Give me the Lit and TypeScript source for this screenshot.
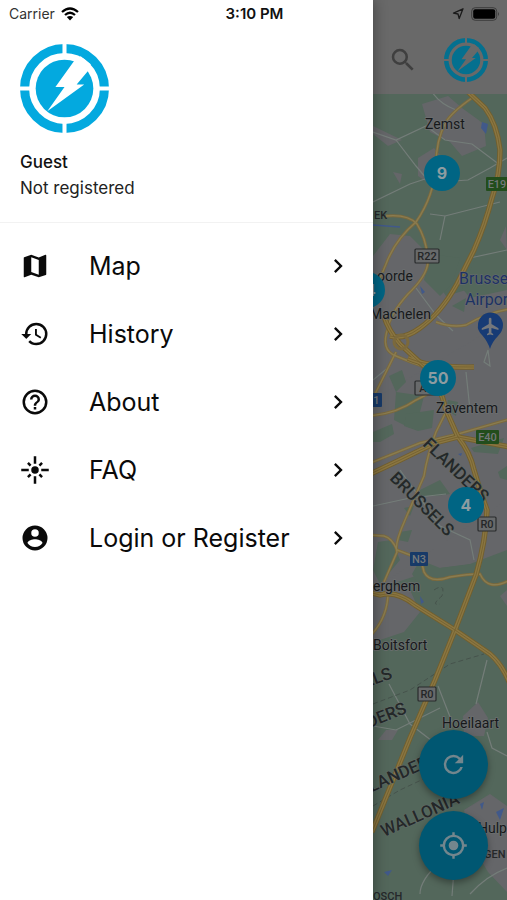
import { LitElement, html, css, svg } from "lit";
import { customElement } from "lit/decorators.js";

const ICONS = {
  map: svg`<path d="M20.5 3l-.16.03L15 5.1 9 3 3.36 4.9c-.21.07-.36.25-.36.48V20.5c0 .28.22.5.5.5l.16-.03L9 18.9l6 2.1 5.64-1.9c.21-.07.36-.25.36-.48V3.5c0-.28-.22-.5-.5-.5zM15 19l-6-2.11V5l6 2.11V19z"/>`,
  history: svg`<path d="M13 3a9 9 0 0 0-9 9H1l3.89 3.89.07.14L9 12H6a7 7 0 1 1 7 7c-1.93 0-3.68-.79-4.94-2.06l-1.42 1.42A8.95 8.95 0 0 0 13 21a9 9 0 0 0 0-18zm-1 5v5l4.28 2.54.72-1.21-3.5-2.08V8H12z"/>`,
  help: svg`<path d="M11 18h2v-2h-2v2zm1-16a10 10 0 1 0 0 20 10 10 0 0 0 0-20zm0 18a8 8 0 1 1 0-16 8 8 0 0 1 0 16zm0-14a4 4 0 0 0-4 4h2a2 2 0 1 1 4 0c0 2-3 1.75-3 5h2c0-2.25 3-2.5 3-5a4 4 0 0 0-4-4z"/>`,
  flare: svg`<path d="M7 11H1v2h6v-2zm2.17-3.24L7.05 5.64 5.64 7.05l2.12 2.12 1.41-1.41zM13 1h-2v6h2V1zm5.36 6.05l-1.41-1.41-2.12 2.12 1.41 1.41 2.12-2.12zM17 11v2h6v-2h-6zm-5-2a3 3 0 1 0 0 6 3 3 0 0 0 0-6zm2.83 7.24l2.12 2.12 1.41-1.41-2.12-2.12-1.41 1.41zm-9.19.71l1.41 1.41 2.12-2.12-1.41-1.41-2.12 2.12zM11 23h2v-6h-2v6z"/>`,
  account: svg`<path d="M12 2a10 10 0 1 0 0 20 10 10 0 0 0 0-20zm0 3a3 3 0 1 1 0 6 3 3 0 0 1 0-6zm0 14.2a7.2 7.2 0 0 1-6-3.22c.03-1.99 4-3.08 6-3.08 1.99 0 5.97 1.09 6 3.08a7.2 7.2 0 0 1-6 3.22z"/>`,
  chevron: svg`<path d="M10 6L8.59 7.41 13.17 12l-4.58 4.59L10 18l6-6z"/>`,
  search: svg`<path d="M15.5 14h-.79l-.28-.27A6.47 6.47 0 0 0 16 9.5 6.5 6.5 0 1 0 9.5 16c1.61 0 3.09-.59 4.23-1.57l.27.28v.79l5 4.99L20.49 19l-4.99-5zm-6 0a4.5 4.5 0 1 1 0-9 4.5 4.5 0 0 1 0 9z"/>`,
  refresh: svg`<path d="M17.65 6.35A7.95 7.95 0 0 0 12 4a8 8 0 1 0 7.73 10h-2.08A6 6 0 1 1 12 6c1.66 0 3.14.69 4.22 1.78L13 11h7V4l-2.35 2.35z"/>`,
  locate: svg`<path d="M12 8a4 4 0 1 0 0 8 4 4 0 0 0 0-8zm8.94 3A8.99 8.99 0 0 0 13 3.06V1h-2v2.06A8.99 8.99 0 0 0 3.06 11H1v2h2.06A8.99 8.99 0 0 0 11 20.94V23h2v-2.06A8.99 8.99 0 0 0 20.94 13H23v-2h-2.06zM12 19a7 7 0 1 1 0-14 7 7 0 0 1 0 14z"/>`,
};

const icon = (name: keyof typeof ICONS) =>
  html`<svg class="icon" viewBox="0 0 24 24" aria-hidden="true">${ICONS[name]}</svg>`;

const MENU: { icon: keyof typeof ICONS; label: string }[] = [
  { icon: "map", label: "Map" },
  { icon: "history", label: "History" },
  { icon: "help", label: "About" },
  { icon: "flare", label: "FAQ" },
  { icon: "account", label: "Login or Register" },
];

const CLUSTERS = [
  { x: 69, y: 79, count: "9" },
  { x: -6, y: 196, count: "14" },
  { x: 65, y: 284, count: "50" },
  { x: 93, y: 411, count: "4" },
];

const MOTORWAYS = [
  "M466 90L485 108Q497 124 500 150Q500 175 492 198Q485 225 474 250L457 284Q441 313 420 328Q404 340 390 336",
  "M384 316Q388 330 400 344L426 368Q440 384 446 410L458 437Q470 452 474 470Q481 494 487 510Q486 540 476 575L455 630L435 680L410 738L372 832",
  "M368 475L400 460L435 443L458 437L510 447",
  "M368 592L380 595Q396 590 415 605L455 630L490 654Q502 664 510 684",
  "M408 358Q430 368 474 367",
];

const ROADS = [
  "M472 98Q452 112 446 122Q436 140 436 165Q434 196 416 222Q395 240 386 264Q378 284 370 296",
  "M386 216Q408 214 417 224Q427 240 428 262Q427 276 408 294Q390 314 388 328",
  "M388 328Q380 350 396 356Q420 366 430 368",
  "M436 322Q452 328 466 325Q488 312 510 309",
  "M368 464L420 443L458 434L510 419",
  "M446 412L436 432Q427 456 424 476L405 520Q394 545 397 552Q391 566 384 582",
  "M396 352Q384 376 372 400",
  "M368 416Q396 414 416 400L440 388",
  "M368 535L384 536Q392 538 397 550L410 555Q422 558 424 572Q430 584 450 577Q468 574 480 574Q488 592 510 580",
  "M388 592Q388 616 372 634",
];

const LANES = [
  "M373 132L396 140L426 126L445 140L472 144L500 165",
  "M396 140L416 166L426 178M507 158L490 168L468 180L440 182",
  "M373 202L410 184L434 176M430 214L445 216L500 202M445 216L440 240",
  "M416 288L436 315L453 331M466 372L470 410M373 506L410 498L446 494M400 470L440 526L470 540L474 560",
  "M373 726L396 730L440 708M389 684L410 724L436 744M438 686L452 722M487 660L476 704M373 380L390 366",
  "M420 894Q420 880 440 862M470 894Q486 876 507 868M454 870L452 896M487 732L492 748L507 756",
  "M432 92Q440 104 456 110M484 362L488 350L490 366ZM470 258L507 250",
];

const BORDERS = [
  "M373 704L410 690L450 664L484 654",
  "M373 806L400 790L430 776",
  "M434 590Q446 582 442 596Q430 606 440 604",
];

const GREY_AREAS = [
  "M422 104L448 96L462 108L484 124L486 146L462 156L450 142L430 132Z",
  "M373 126L402 140L388 146L373 134Z",
  "M418 158L434 148L446 162L430 184L418 176Z",
  "M373 256L390 234L410 236L424 250L430 272L446 296L466 290L507 284V448L507 560L440 568L373 590Z",
  "M373 400L507 320V500L373 590Z",
  "M373 580L410 590L420 612L404 632L380 640L373 650Z",
  "M500 596L507 590V606Z",
  "M463 716L478 702L488 718L484 736L464 736Z",
  "M464 810L490 794L507 806V892L488 872L474 848Z",
  "M393 172L402 174L400 184Z",
  "M506 226L500 240L507 250Z",
  "M386 730H398L392 740H378Z",
];

const PARKS = [
  "M430 254L460 258L452 284L440 296L424 280Z",
  "M478 254H507V290L470 298L462 288Z",
  "M452 306L466 298L464 312Z",
  "M389 376L402 370L406 382L396 392Z",
  "M396 392L424 396L420 412L410 428L394 420Z",
  "M448 400L458 402L456 416L446 410Z",
  "M373 432L392 424L394 434L380 442H373Z",
  "M406 414L434 410L432 428L418 431L404 426Z",
  "M471 448L504 438L498 454L474 452Z",
  "M420 490L440 480L450 494L436 496L418 496Z",
  "M498 472L507 466V480L500 478Z",
  "M378 542L392 540L400 560L380 584L373 570Z",
  "M404 508L414 506L410 516ZM400 532L412 530L408 542L398 540Z",
  "M412 574L420 560L440 568L470 564L507 550V580H416Z",
];

const WATERS = [
  "M482 122L488 124L486 134L481 128Z",
  "M420 286L425 292L422 294Z",
  "M458 454L462 453L461 456Z",
  "M480 804L484 802L482 810Z",
  "M496 812L504 808L500 820Z",
  "M420 596L424 602L421 604Z",
  "M384 872L392 870L388 876Z",
];

const PLACES = [
  { x: 425, y: 129, t: "Zemst" },
  { x: 377, y: 281, t: "oorde" },
  { x: 370, y: 319, t: "Machelen" },
  { x: 436, y: 413, t: "Zaventem" },
  { x: 373, y: 591, t: "erghem" },
  { x: 373, y: 650, t: "Boitsfort" },
  { x: 442, y: 728, t: "Hoeilaart" },
  { x: 478, y: 833, t: "Hulpe" },
];

const SHIELDS = [
  { x: 415, y: 249, w: 24, t: "R22", kind: "plain" },
  { x: 415, y: 381, w: 22, t: "A3", kind: "plain" },
  { x: 478, y: 517, w: 18, t: "R0", kind: "plain" },
  { x: 418, y: 687, w: 18, t: "R0", kind: "plain" },
  { x: 486, y: 177, w: 22, t: "E19", kind: "green" },
  { x: 476, y: 430, w: 23, t: "E40", kind: "green" },
  { x: 410, y: 552, w: 18, t: "N3", kind: "blue" },
  { x: 363, y: 393, w: 19, t: "N1", kind: "blue" },
];

const REGIONS = [
  { x: 422, y: 445, r: 44, t: "FLANDERS" },
  { x: 389, y: 479, r: 45, t: "BRUSSELS" },
  { x: 316, y: 706, r: -20, t: "BRUSSELS" },
  { x: 330, y: 744, r: -22, t: "FLANDERS" },
  { x: 363, y: 796, r: -24, t: "FLANDERS" },
  { x: 384, y: 837, r: -24, t: "WALLONIA" },
];

@customElement("brand-logo")
class BrandLogo extends LitElement {
  static styles = css`
    :host { display: block; }
    svg { display: block; width: 100%; height: 100%; }
    .ring { fill: none; stroke: currentColor; stroke-width: 9; }
    .disc { fill: currentColor; }
    .gap { stroke: var(--logo-ground, #fff); stroke-width: 4; }
    .bolt { fill: var(--logo-ground, #fff); }
  `;
  render() {
    return html`<svg viewBox="0 0 88 88" role="img" aria-label="Logo">
      <circle class="ring" cx="44" cy="44" r="39.5" />
      <path class="gap" d="M44 0V12M44 76V88M0 44H12M76 44H88" />
      <circle class="disc" cx="44" cy="44" r="28.5" />
      <path class="bolt" d="M54 16L35 42.500H44L27 66.500L63.500 40H56L67 27L70 20L60 12Z" />
    </svg>`;
  }
}

@customElement("city-map")
class CityMap extends LitElement {
  static styles = css`
    :host { display: block; position: relative; overflow: hidden; background: #53675b; }
    .canvas { position: absolute; inset: 0; width: 100%; height: 100%; }
    .grey { fill: #656669; }
    .park { fill: #53675b; }
    .water { fill: #41598a; }
    .lane { fill: none; stroke: #747d79; stroke-width: 1.2; }
    .border { fill: none; stroke: #46534c; stroke-width: 1; stroke-dasharray: 5 3; }
    .road { fill: none; stroke: #7b693c; stroke-width: 3; }
    .road-core { fill: none; stroke: #8a7c50; stroke-width: 1.4; }
    .motorway { fill: none; stroke: #735f2c; stroke-width: 5.4; }
    .motorway-core { fill: none; stroke: #8a7642; stroke-width: 3.6; }
    .motorway-mid { fill: none; stroke: #735f2c; stroke-width: .8; }
    text { font-family: Roboto, sans-serif; }
    .place { font-size: 14px; fill: #17191b; stroke: #6c6f70; stroke-width: 1.5; paint-order: stroke; }
    .small { font-size: 11px; font-weight: 500; fill: #25282a; }
    .region { font-size: 17px; font-weight: 500; fill: #242829; stroke: #636b68; stroke-width: 1; paint-order: stroke; }
    .airport { font-size: 16px; fill: #1d3263; stroke: #6b6d72; stroke-width: 1; paint-order: stroke; }
    .pin { fill: #173b75; }
    .plane { fill: #74777c; }
    .shield-text { font-size: 11px; font-weight: 500; text-anchor: middle; fill: #74787a; }
    .plain { fill: #686a6b; stroke: #292b2c; stroke-width: 1.2; }
    .green { fill: #224d1c; }
    .blue { fill: #183a68; }
    .shield-text.on-plain { fill: #242627; }
    .cluster {
      position: absolute;
      width: 36px;
      height: 36px;
      transform: translate(-50%, -50%);
      border: 0;
      border-radius: 50%;
      padding: 0;
      background: #006584;
      color: #8d9ca1;
      font: 700 16px/36px Inter, sans-serif;
    }
  `;
  render() {
    return html`
      <svg class="canvas" viewBox="373 94 134 806" preserveAspectRatio="xMinYMin slice" aria-hidden="true">
        ${GREY_AREAS.map((d) => svg`<path class="grey" d=${d} />`)}
        ${PARKS.map((d) => svg`<path class="park" d=${d} />`)}
        ${WATERS.map((d) => svg`<path class="water" d=${d} />`)}
        <path d="M373 225L400 227" stroke="#41598a" stroke-width="1.5" />
        ${LANES.map((d) => svg`<path class="lane" d=${d} />`)}
        ${BORDERS.map((d) => svg`<path class="border" d=${d} />`)}
        ${ROADS.map((d) => svg`<path class="road" d=${d} />`)}
        ${ROADS.map((d) => svg`<path class="road-core" d=${d} />`)}
        ${MOTORWAYS.map((d) => svg`<path class="motorway" d=${d} />`)}
        ${MOTORWAYS.map((d) => svg`<path class="motorway-core" d=${d} />`)}
        ${MOTORWAYS.map((d) => svg`<path class="motorway-mid" d=${d} />`)}
        <circle class="road" cx="401" cy="342" r="7" />
        ${REGIONS.map((p) => svg`<text class="region" transform="translate(${p.x} ${p.y}) rotate(${p.r})">${p.t}</text>`)}
        ${SHIELDS.map((s) => svg`
          <rect class=${s.kind} x=${s.x} y=${s.y} width=${s.w} height="14" rx="1" />
          <text class="shield-text on-${s.kind}" x=${s.x + s.w / 2} y=${s.y + 11}>${s.t}</text>`)}
        ${PLACES.map((p) => svg`<text class="place" x=${p.x} y=${p.y}>${p.t}</text>`)}
        <text class="small" x="374" y="219">EK</text>
        <text class="small" x="484" y="858">GEN</text>
        <text class="small" x="373" y="900">OSCH</text>
        <text class="airport" x="459" y="284">Brussels</text>
        <text class="airport" x="465" y="305">Airport</text>
        <path class="pin" d="M490 349Q488 342 482 335Q477 330 478 325A12.5 12.5 0 0 1 503 325Q503 331 498 336Q492 342 490 349Z" />
        <path class="plane" transform="translate(480 316) scale(.88)" d="M21 16v-2l-8-5V3.500a1.500 1.500 0 0 0-3 0V9l-8 5v2l8-2.500V19l-2 1.500V22l3.500-1 3.500 1v-1.500L13 19v-5.500l8 2.500z" />
      </svg>
      ${CLUSTERS.map(
        (c) => html`<button class="cluster" style="left:${c.x}px;top:${c.y}px">${c.count}</button>`
      )}
    `;
  }
}

@customElement("app-root")
class AppRoot extends LitElement {
  static styles = css`
    :host {
      display: block;
      position: relative;
      font-family: Inter, "Noto Sans", sans-serif;
      color: #111;
    }
    * { box-sizing: border-box; }
    button { cursor: pointer; }
    .screen { display: flex; min-height: 100vh; }
    .status {
      position: absolute;
      inset: 0 0 auto 0;
      z-index: 3;
      display: grid;
      grid-template-columns: 1fr auto 1fr;
      align-items: center;
      height: 27px;
      padding: 0 7px 0 9px;
      font-size: 14px;
    }
    .carrier { display: flex; align-items: center; gap: 6px; color: #333; }
    .wifi { width: 18px; height: 14px; color: #000; }
    .time { font-weight: 600; font-size: 15px; line-height: 18px; }
    .device { display: flex; justify-content: flex-end; align-items: center; gap: 6px; }
    .arrow { width: 13px; height: 13px; }
    .battery { width: 29px; height: 14px; }
    .drawer {
      flex: 0 0 373px;
      max-width: 80vw;
      background: #fff;
      position: relative;
      z-index: 2;
      box-shadow: 2px 0 12px rgba(0, 0, 0, 0.3);
    }
    .profile { padding: 44px 20px 21px; border-bottom: 1px solid #f2f2f2; }
    .avatar { width: 89px; height: 89px; color: #03a9df; }
    .name, .state { margin: 0; font-size: 17px; line-height: 26px; }
    .name { margin-top: 16px; font-weight: 500; }
    .state { color: #222; }
    .menu { list-style: none; margin: 0; padding: 9px 0; }
    .item {
      display: flex;
      align-items: center;
      width: 100%;
      height: 68px;
      padding: 0 21px 0 20px;
      color: #0a0a0a;
      text-decoration: none;
      font-size: 25px;
    }
    .label { flex: 1; margin-left: 39px; }
    .icon { display: block; width: 30px; height: 30px; fill: currentColor; }
    .go .icon { width: 28px; height: 28px; }
    .page { flex: 1; min-width: 0; display: flex; flex-direction: column; position: relative; }
    .topbar {
      display: flex;
      align-items: center;
      justify-content: space-between;
      height: 94px;
      padding: 26px 19px 0 15px;
      background: #696969;
      color: #3f3f3f;
    }
    .search { border: 0; padding: 0; background: none; color: inherit; }
    .brand { width: 44px; height: 44px; color: #04708f; --logo-ground: #696969; }
    .map { flex: 1; }
    .actions {
      position: absolute;
      right: 19px;
      bottom: 20px;
      display: flex;
      flex-direction: column;
      gap: 12px;
    }
    .fab {
      display: grid;
      place-items: center;
      width: 69px;
      height: 69px;
      padding: 0;
      border: 0;
      border-radius: 50%;
      background: #005772;
      color: #73868d;
      box-shadow: 0 3px 7px rgba(0, 0, 0, 0.35);
    }
    .fab .icon { width: 29px; height: 29px; }
  `;
  render() {
    return html`
      <header class="status">
        <span class="carrier">Carrier
          <svg class="wifi" viewBox="0 0 18 14" aria-hidden="true">
            <path d="M1 5Q9 -2 17 5M4 8Q9 3.500 14 8" fill="none" stroke="currentColor" stroke-width="2.300" />
            <path d="M9 13.500L5.800 10Q9 7.800 12.200 10Z" fill="currentColor" />
          </svg>
        </span>
        <span class="time">3:10 PM</span>
        <span class="device">
          <svg class="arrow" viewBox="0 0 13 13" aria-hidden="true">
            <path d="M1.500 6.200L11 1.800L7.200 11.500L6 7Z" fill="none" stroke="#1a1a1a" stroke-width="1.300" stroke-linejoin="round" />
          </svg>
          <svg class="battery" viewBox="0 0 29 14" aria-hidden="true">
            <rect x=".7" y=".7" width="25" height="12.600" rx="3.500" fill="none" stroke="#3c3c3c" />
            <rect x="2.200" y="2.200" width="22" height="9.600" rx="2" fill="#000" />
            <path d="M27 5Q29 7 27 9Z" fill="#3c3c3c" />
          </svg>
        </span>
      </header>
      <div class="screen">
        <aside class="drawer">
          <section class="profile">
            <brand-logo class="avatar"></brand-logo>
            <p class="name">Guest</p>
            <p class="state">Not registered</p>
          </section>
          <nav>
            <ul class="menu">
              ${MENU.map(
                (m) => html`<li><a class="item" href="#">
                  ${icon(m.icon)}<span class="label">${m.label}</span><span class="go">${icon("chevron")}</span>
                </a></li>`
              )}
            </ul>
          </nav>
        </aside>
        <main class="page">
          <div class="topbar">
            <button class="search" aria-label="Search">${icon("search")}</button>
            <brand-logo class="brand"></brand-logo>
          </div>
          <city-map class="map"></city-map>
          <div class="actions">
            <button class="fab" aria-label="Refresh">${icon("refresh")}</button>
            <button class="fab" aria-label="My location">${icon("locate")}</button>
          </div>
        </main>
      </div>
    `;
  }
}
